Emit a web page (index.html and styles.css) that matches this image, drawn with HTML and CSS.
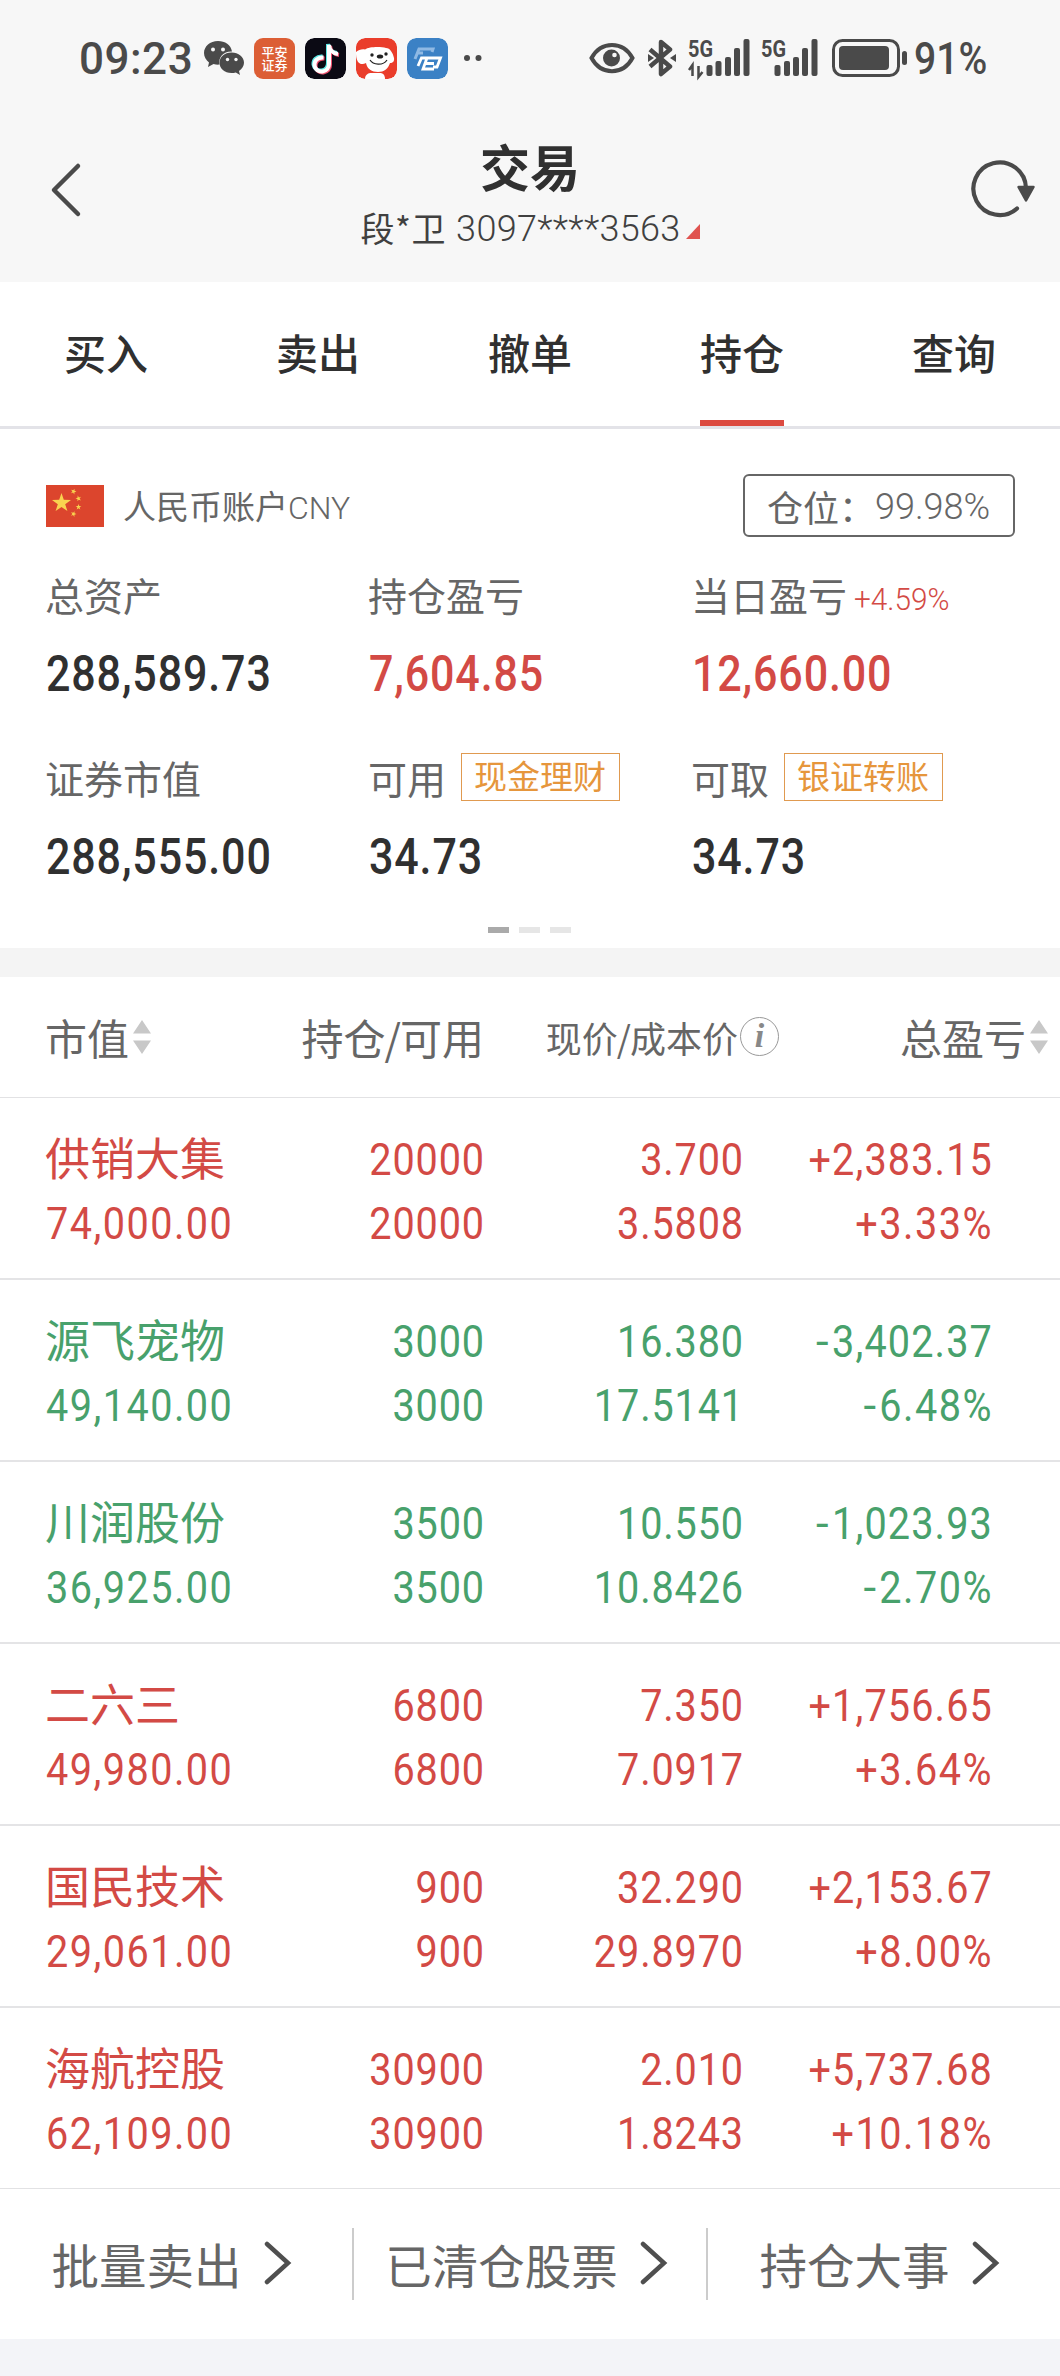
FILE: index.html
```html
<!DOCTYPE html>
<html lang="zh-CN">
<head>
    <meta charset="UTF-8">
    <meta name="viewport" content="width=device-width, initial-scale=1.0">
    <title>交易</title>
    <link rel="stylesheet" href="styles.css">
</head>
<body>
    <div class="status-bar">
        <span class="time">09:23</span>
        <svg class="wechat" width="42" height="36" viewBox="0 0 42 36">
            <path d="M15 1C7 1 1 6.500 1 13c0 4 2 7 5 9.500L5 27l5.500-3c2 .6 4 .8 6 .6C15 17 21 11 29 11.500 28 5 22 1 15 1z" fill="#4a4a4a"/>
            <path d="M28.500 12.500c-7 0-12 4.500-12 10.300s5 10.300 12 10.300c1.500 0 3-.2 4.300-.6L37 35l-1-4c3-2 5-5 5-8.200 0-5.800-5.500-10.300-12.500-10.300z" fill="#4a4a4a"/>
            <g fill="#f7f7f7"><circle cx="10" cy="9.500" r="2"/><circle cx="20" cy="9.500" r="2"/><circle cx="24.500" cy="19.500" r="1.700"/><circle cx="33" cy="19.500" r="1.700"/></g>
        </svg>
        <div class="app-icon pingan"><span>平安</span><span>证券</span></div>
        <svg class="app-icon" width="41" height="41" viewBox="0 0 41 41">
            <rect width="41" height="41" rx="9" fill="#0b0a14"/>
            <g fill="none" stroke-width="4">
                <path d="M17.500 18.500c-6-.5-9.500 3.500-9 8 .5 4 4 6.500 8 6 4-.5 6.500-3.500 6.500-7.500V6c.5 5 4 8.500 9 9" stroke="#5de6e4"/>
                <path d="M19.500 20.500c-6-.5-9.500 3.500-9 8 .5 4 4 6.500 8 6 4-.5 6.500-3.500 6.500-7.500V8c.5 5 4 8.500 9 9" stroke="#f0506e"/>
                <path d="M18.500 19.500c-6-.5-9.500 3.500-9 8 .5 4 4 6.500 8 6 4-.5 6.500-3.500 6.500-7.500V7c.5 5 4 8.500 9 9" stroke="#fff"/>
            </g>
        </svg>
        <svg class="app-icon" width="41" height="41" viewBox="0 0 41 41">
            <rect width="41" height="41" rx="9" fill="#ea3d2b"/>
            <path d="M0 14c3-2 5-3 9-2.500 4-3 16-3 21-1.500 4 0 7 5 8 10 .5 3-1 5-4 5-2 6-6 9-12 9s-11-3-12-9c-4 2-6 1-8-1-2-3-2-7-2-10z" fill="#fff"/>
            <path d="M9 41c0-5 4-6 6-6h9c3 0 5 2 5 6z" fill="#fff"/>
            <circle cx="16" cy="17" r="1.700" fill="#222"/><circle cx="30" cy="16" r="1.700" fill="#222"/>
            <ellipse cx="24" cy="18.500" rx="3.200" ry="2" fill="#222"/>
            <path d="M14 22c3 5 13 6 17 0" fill="none" stroke="#222" stroke-width="1.200"/>
        </svg>
        <svg class="app-icon" width="41" height="41" viewBox="0 0 41 41">
            <rect width="41" height="41" rx="9" fill="#3b81c5"/>
            <path d="M8 21l4-10h14l-1 3M11 15h5" fill="none" stroke="#8fb9e4" stroke-width="3"/>
            <path d="M11 28l3.500-8H33.500L30 29h-4M20 20l-4 11h11M18 25.500h9" fill="none" stroke="#fff" stroke-width="2.800"/>
        </svg>
        <svg class="more-dots" width="20" height="8" viewBox="0 0 20 8"><circle cx="4" cy="4" r="3" fill="#4a4a4a"/><circle cx="15.500" cy="4" r="3" fill="#4a4a4a"/></svg>

        <div class="status-right">
            <svg width="46" height="32" viewBox="0 0 46 32">
                <path d="M2.500 16C12-1.500 34-1.500 43.500 16 34 33.500 12 33.500 2.500 16z" fill="none" stroke="#4a4a4a" stroke-width="4"/>
                <circle cx="22.500" cy="16" r="8.500" fill="#4a4a4a"/><circle cx="25.500" cy="13" r="2.300" fill="#f7f7f7"/>
            </svg>
            <svg class="bluetooth" width="30" height="38" viewBox="0 0 30 38">
                <path d="M3 10.500l20 17L14 35V3l9 7.500-20 17" fill="none" stroke="#4a4a4a" stroke-width="4.500" stroke-linejoin="round"/>
                <path d="M1 15l6 4-6 4zM29 15l-6 4 6 4z" fill="#4a4a4a"/>
            </svg>
            <svg class="signal" width="63" height="40" viewBox="0 0 63 40">
                <text x="0" y="19" class="network" textLength="25" lengthAdjust="spacingAndGlyphs">5G</text>
                <path d="M4.500 38V27L1 32M10.500 28v11l4-5" fill="none" stroke="#4a4a4a" stroke-width="2.500"/>
                <g fill="#4a4a4a"><rect x="18.500" y="27" width="6" height="11" rx="2"/><rect x="27.500" y="23" width="6" height="15" rx="2"/><rect x="37" y="19" width="6" height="19" rx="2"/><rect x="46" y="10" width="6" height="28" rx="2"/><rect x="55.500" y="1" width="6" height="37" rx="2"/></g>
            </svg>
            <svg class="signal" width="58" height="40" viewBox="0 0 58 40">
                <text x="0" y="19" class="network" textLength="25" lengthAdjust="spacingAndGlyphs">5G</text>
                <g fill="#4a4a4a"><rect x="13.500" y="27" width="6" height="11" rx="2"/><rect x="23" y="23" width="6" height="15" rx="2"/><rect x="32" y="19" width="6" height="19" rx="2"/><rect x="41" y="10" width="6" height="28" rx="2"/><rect x="50.500" y="1" width="6" height="37" rx="2"/></g>
            </svg>
            <svg class="battery" width="77" height="38" viewBox="0 0 77 38">
                <rect x="1.500" y="1.500" width="65" height="35" rx="9" fill="none" stroke="#4a4a4a" stroke-width="3"/>
                <rect x="7" y="7" width="50" height="24" rx="4" fill="#4a4a4a"/>
                <rect x="70" y="12" width="5" height="14" rx="2.500" fill="#4a4a4a"/>
            </svg>
            <span class="percent">91%</span>
        </div>
    </div>

    <header class="header">
        <svg class="back" width="32" height="56" viewBox="0 0 32 56"><path d="M28 4L4 28l24 24" fill="none" stroke="#4a4a4a" stroke-width="4.500" stroke-linecap="round" stroke-linejoin="round"/></svg>
        <div class="title-box">
            <h1>交易</h1>
            <div class="account"><span>段*卫</span><span class="account-no">3097****3563</span><i class="corner"></i></div>
        </div>
        <svg class="refresh" width="66" height="60" viewBox="0 0 66 60">
            <path d="M47 49.500A26.300 26.300 0 1 1 56 29" fill="none" stroke="#4a4a4a" stroke-width="4.200" stroke-linecap="round"/>
            <path d="M48.500 28h15L56 41.500z" fill="#4a4a4a" stroke="#4a4a4a" stroke-width="2.500" stroke-linejoin="round"/>
        </svg>
    </header>

    <nav class="tabs">
        <a class="tab">买入</a>
        <a class="tab">卖出</a>
        <a class="tab">撤单</a>
        <a class="tab active">持仓</a>
        <a class="tab">查询</a>
    </nav>

    <section class="assets">
        <div class="account-row">
            <svg width="58" height="42" viewBox="0 0 58 42">
                <defs><path id="star" d="M0-10L2.300-3.200 9.500-3.100 3.700 1.200 5.900 8.100 0 3.900-5.900 8.100-3.700 1.200-9.500-3.100-2.300-3.200z"/></defs>
                <rect width="58" height="42" fill="#dc452d"/>
                <g fill="#f9d34f">
                    <use href="#star" transform="translate(15.500 18)"/>
                    <use href="#star" transform="translate(27.500 6.500) rotate(20) scale(.3)"/>
                    <use href="#star" transform="translate(32.500 13.500) rotate(-15) scale(.3)"/>
                    <use href="#star" transform="translate(32.500 22) scale(.3)"/>
                    <use href="#star" transform="translate(27.500 29) rotate(20) scale(.3)"/>
                </g>
            </svg>
            <span class="account-name">人民币账户<span class="currency">CNY</span></span>
            <div class="position"><span>仓位：</span><span class="position-num">99.98%</span></div>
        </div>
        <div class="asset-grid">
            <div class="asset">
                <div class="label">总资产</div>
                <div class="value">288,589.73</div>
            </div>
            <div class="asset">
                <div class="label">持仓盈亏</div>
                <div class="value red">7,604.85</div>
            </div>
            <div class="asset">
                <div class="label">当日盈亏<span class="rate">+4.59%</span></div>
                <div class="value red">12,660.00</div>
            </div>
            <div class="asset">
                <div class="label">证券市值</div>
                <div class="value">288,555.00</div>
            </div>
            <div class="asset">
                <div class="label">可用<span class="tag">现金理财</span></div>
                <div class="value">34.73</div>
            </div>
            <div class="asset">
                <div class="label">可取<span class="tag">银证转账</span></div>
                <div class="value">34.73</div>
            </div>
        </div>
        <div class="pager"><i class="on"></i><i></i><i></i></div>
    </section>

    <section class="holdings">
        <div class="table-head">
            <div class="left">市值<svg class="sort" width="18" height="34" viewBox="0 0 18 34"><path d="M0 13.500L9 0l9 13.500zM0 20.500L9 34l9-13.500z" fill="#c8c8c8"/></svg></div>
            <div>持仓<span class="slash">/</span>可用</div>
            <div class="small">现价<span class="slash">/</span>成本价<span class="info">i</span></div>
            <div>总盈亏<svg class="sort" width="18" height="34" viewBox="0 0 18 34"><path d="M0 13.500L9 0l9 13.500zM0 20.500L9 34l9-13.500z" fill="#c8c8c8"/></svg></div>
        </div>
        <div class="row red">
            <div class="name">供销大集</div><div>20000</div><div>3.700</div><div class="profit">+2,383.15</div>
            <div class="left">74,000.00</div><div>20000</div><div>3.5808</div><div class="ratio">+3.33%</div>
        </div>
        <div class="row green">
            <div class="name">源飞宠物</div><div>3000</div><div>16.380</div><div class="profit"><i class="minus">-</i>3,402.37</div>
            <div class="left">49,140.00</div><div>3000</div><div>17.5141</div><div class="ratio"><i class="minus">-</i>6.48%</div>
        </div>
        <div class="row green">
            <div class="name">川润股份</div><div>3500</div><div>10.550</div><div class="profit"><i class="minus">-</i>1,023.93</div>
            <div class="left">36,925.00</div><div>3500</div><div>10.8426</div><div class="ratio"><i class="minus">-</i>2.70%</div>
        </div>
        <div class="row red">
            <div class="name">二六三</div><div>6800</div><div>7.350</div><div class="profit">+1,756.65</div>
            <div class="left">49,980.00</div><div>6800</div><div>7.0917</div><div class="ratio">+3.64%</div>
        </div>
        <div class="row red">
            <div class="name">国民技术</div><div>900</div><div>32.290</div><div class="profit">+2,153.67</div>
            <div class="left">29,061.00</div><div>900</div><div>29.8970</div><div class="ratio">+8.00%</div>
        </div>
        <div class="row red">
            <div class="name">海航控股</div><div>30900</div><div>2.010</div><div class="profit">+5,737.68</div>
            <div class="left">62,109.00</div><div>30900</div><div>1.8243</div><div class="ratio">+10.18%</div>
        </div>
    </section>

    <footer class="links">
        <a class="link">批量卖出<svg width="28" height="44" viewBox="0 0 28 44"><path d="M3 3l21 19L3 41" fill="none" stroke="#4f4f4f" stroke-width="4.500" stroke-linecap="round"/></svg></a>
        <a class="link wide">已清仓股票<svg width="28" height="44" viewBox="0 0 28 44"><path d="M3 3l21 19L3 41" fill="none" stroke="#4f4f4f" stroke-width="4.500" stroke-linecap="round"/></svg></a>
        <a class="link">持仓大事<svg width="28" height="44" viewBox="0 0 28 44"><path d="M3 3l21 19L3 41" fill="none" stroke="#4f4f4f" stroke-width="4.500" stroke-linecap="round"/></svg></a>
    </footer>
</body>
</html>
```
FILE: styles.css
```css
:root {
    --red: #d34a45;
    --green: #48a16c;
    --gray: #666;
    --dark: #303030;
    --icon: #4a4a4a;
    --num: Roboto, "Noto Sans CJK SC", sans-serif;
}

* {
    box-sizing: border-box;
}

body {
    margin: 0;
    height: 2376px;
    background-color: #f3f4f8;
    font-family: "Noto Sans CJK SC", sans-serif;
    color: var(--gray);
    overflow: hidden;
}

svg {
    display: block;
    flex: none;
}

/* status bar */
.status-bar {
    display: flex;
    align-items: center;
    height: 116px;
    padding-left: 79px;
    background-color: #f7f7f7;
    color: var(--icon);
    white-space: nowrap;
}

.time {
    width: 124px;
    padding-top: 2px;
    font: 500 44px/58px var(--num);
    letter-spacing: 0.5px;
}

.app-icon {
    width: 41px;
    height: 41px;
    margin-left: 10px;
    border-radius: 9px;
}

.wechat {
    margin-right: -1px;
}

.pingan {
    display: flex;
    flex-direction: column;
    justify-content: center;
    align-items: center;
    background-color: #dc5e35;
    color: #fff;
    font-size: 13px;
    font-weight: 500;
    line-height: 13px;
}

.more-dots {
    margin-left: 15px;
}

.status-right {
    display: flex;
    align-items: center;
    width: 471px;
    margin-left: auto;
}

.bluetooth {
    margin-left: 12px;
}

.signal {
    margin-left: 11px;
    overflow: visible;
}

.signal + .signal {
    margin-left: 10px;
}

.network {
    font: 700 24px Roboto, sans-serif;
    fill: var(--icon);
}

.battery {
    margin-left: 13px;
}

.percent {
    margin-left: 5px;
    padding-top: 2px;
    font: 500 44px/58px var(--num);
    transform: scaleX(0.89);
    transform-origin: left;
}

/* title */
.header {
    display: flex;
    justify-content: space-between;
    height: 166px;
    padding: 0 24px 0 50px;
    background-color: #f7f7f7;
}

.back {
    margin: 46px 8px 0 0;
}

.refresh {
    margin-top: 43px;
}

.title-box {
    text-align: center;
}

h1 {
    margin: 19px 0 0;
    font-size: 50px;
    font-weight: 700;
    line-height: 60px;
    color: var(--dark);
}

.account {
    display: flex;
    align-items: center;
    margin-top: 12px;
    font-size: 34px;
    line-height: 40px;
    letter-spacing: 0.6px;
    color: #404040;
}

.account-no {
    margin: 2px 0 0 10px;
    font-family: var(--num);
    font-weight: 300;
    font-size: 36px;
    letter-spacing: 0.3px;
}

.corner {
    margin: 6px 0 0 5px;
    border-left: 14px solid transparent;
    border-bottom: 15px solid #e05350;
}

/* tabs */
.tabs {
    display: grid;
    grid-template-columns: repeat(5, 1fr);
    justify-items: center;
    height: 147px;
    background-color: #fff;
    border-bottom: 3px solid #e3e3e8;
}

.tab {
    height: 144px;
    font-size: 42px;
    font-weight: 500;
    line-height: 140px;
    color: var(--dark);
}

.active {
    border-bottom: 6px solid #dc4a40;
}

/* account summary */
.assets {
    height: 519px;
    padding: 45px 45px 0 46px;
    background-color: #fff;
}

.account-row {
    display: flex;
    align-items: center;
    height: 63px;
}

.account-name {
    margin: -2px 0 0 19px;
    font-size: 33px;
}

.currency {
    font-family: var(--num);
    font-weight: 300;
    font-size: 32px;
}

.position {
    display: flex;
    align-items: center;
    width: 272px;
    height: 63px;
    margin-left: auto;
    padding-left: 22px;
    border: 2px solid #666;
    border-radius: 6px;
    font-size: 36px;
    line-height: 50px;
    white-space: nowrap;
}

.position-num {
    padding-top: 3px;
    font-family: var(--num);
    font-weight: 300;
}

.asset-grid {
    display: grid;
    grid-template-columns: repeat(3, 323px);
    margin-top: 27px;
}

.asset {
    height: 183px;
}

.label {
    display: flex;
    align-items: center;
    height: 60px;
    margin-left: -1px;
    font-size: 39px;
}

.rate {
    margin: 12px 0 0 7px;
    font: 300 31px/40px var(--num);
    color: var(--red);
    transform: scaleX(0.96);
    transform-origin: left;
}

.tag {
    height: 48px;
    margin-left: 15px;
    padding: 0 13px 0 12px;
    border: 1px solid #e09a50;
    font-size: 33px;
    line-height: 43px;
    color: #e6963c;
}

.value {
    margin-top: 20px;
    font: 500 50px/60px var(--num);
    letter-spacing: 1px;
    color: var(--dark);
    transform: scaleX(0.86);
    transform-origin: left;
}

.value.red {
    color: var(--red);
}

.pager {
    display: flex;
    justify-content: center;
    gap: 10px;
    margin: -3px 2px 0 0;
}

.pager i {
    width: 21px;
    height: 6px;
    background-color: #e6e6e6;
}

.pager .on {
    background-color: #aaa;
}

/* holdings */
.holdings {
    border-top: 29px solid #f4f4f4;
    background-color: #fff;
}

.table-head {
    display: grid;
    grid-template-columns: 200px 239px 295px 269px;
    height: 121px;
    padding-left: 45px;
    border-bottom: 1px solid #e2e2e4;
    font-size: 42px;
    line-height: 120px;
    white-space: nowrap;
}

.table-head > div {
    display: flex;
    justify-content: flex-end;
    align-items: center;
}

.table-head .left {
    justify-content: flex-start;
}

.table-head .small {
    font-size: 36px;
}

.slash {
    margin: 0 -1px;
}

.sort {
    margin: 0 0 0 4px;
}

.info {
    width: 39px;
    height: 39px;
    margin: 0 0 2px 2px;
    border: 1.5px solid #999;
    border-radius: 50%;
    font: italic 700 34px/35px "Liberation Serif", serif;
    text-align: center;
    color: #888;
}

.row {
    display: grid;
    grid-template-columns: 200px 240px 259px 249px;
    grid-template-rows: 64px 64px;
    height: 182px;
    padding: 30px 0 0 45px;
    border-bottom: 2px solid #e4e4e6;
    font-family: var(--num);
    font-size: 45px;
    font-weight: 400;
    line-height: 64px;
    letter-spacing: 1px;
    white-space: nowrap;
}

.row > div {
    text-align: right;
    transform: scaleX(0.88);
    transform-origin: right;
}

.row > .left {
    padding-left: 1px;
    text-align: left;
    letter-spacing: 1.7px;
    transform-origin: left;
}

.row > .profit {
    letter-spacing: 1.3px;
}

.row > .ratio {
    letter-spacing: 1.7px;
}

.row > .name {
    margin-top: -3px;
    font-family: "Noto Sans CJK SC", sans-serif;
    font-weight: 400;
    letter-spacing: 0;
    text-align: left;
    transform: none;
}

.minus {
    display: inline-block;
    width: 22px;
    font-style: normal;
    font-weight: 400;
    letter-spacing: 0;
    text-align: center;
    transform: scaleX(1.15);
}

.red {
    color: var(--red);
}

.green {
    color: var(--green);
}

.row:last-child {
    height: 181px;
    border-bottom: 1px solid #e2e2e4;
}

/* bottom links */
.links {
    display: grid;
    grid-template-columns: 352px 354px 354px;
    align-items: center;
    height: 150px;
    background-color: #fff;
}

.link {
    display: flex;
    justify-content: center;
    align-items: center;
    gap: 22px;
    height: 72px;
    padding: 0 9px 2px 0;
    border-left: 2px solid #ccc;
    font-size: 47.5px;
    white-space: nowrap;
}

.link.wide {
    padding-right: 7px;
    font-size: 46.5px;
}

.link:first-child {
    border-left: none;
}
```
